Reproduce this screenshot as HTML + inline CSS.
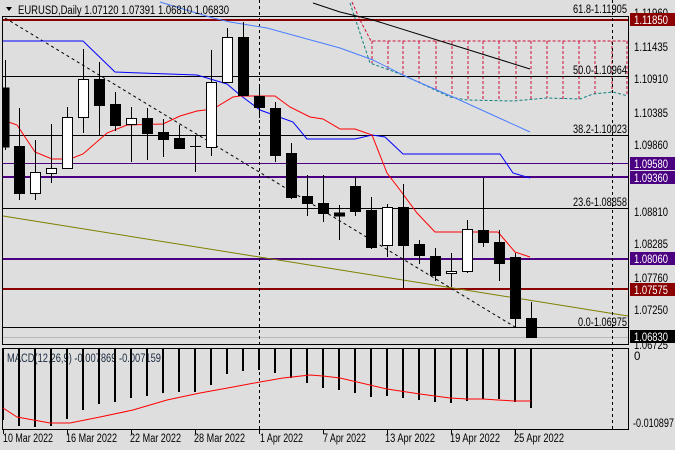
<!DOCTYPE html>
<html><head><meta charset="utf-8"><style>
html,body{margin:0;padding:0;background:#dedede;}
svg{display:block;font-family:"Liberation Sans",sans-serif;font-size:11.5px;}
</style></head><body>
<svg width="675" height="450" viewBox="0 0 675 450" xmlns="http://www.w3.org/2000/svg">
<rect width="675" height="450" fill="#dedede"/>
<rect x="2.5" y="16.5" width="626" height="328" fill="none" stroke="#000"/>
<rect x="2.5" y="348.5" width="626" height="81" fill="none" stroke="#000"/>
<g stroke="#d0103a" stroke-width="1" stroke-dasharray="3,2" fill="none">
<polyline points="352,2 360,20 371,41 628,41"/>
<line x1="372" y1="41" x2="372" y2="63"/><line x1="388" y1="41" x2="388" y2="69"/><line x1="403" y1="41" x2="403" y2="75"/><line x1="419" y1="41" x2="419" y2="83"/><line x1="436" y1="41" x2="436" y2="90"/><line x1="452" y1="41" x2="452" y2="97"/><line x1="468" y1="41" x2="468" y2="100"/><line x1="483" y1="41" x2="483" y2="100"/><line x1="499" y1="41" x2="499" y2="101"/><line x1="516" y1="41" x2="516" y2="101"/><line x1="531" y1="41" x2="531" y2="100"/><line x1="547" y1="41" x2="547" y2="98"/><line x1="563" y1="41" x2="563" y2="99"/><line x1="579" y1="41" x2="579" y2="99"/><line x1="595" y1="41" x2="595" y2="94"/><line x1="612" y1="41" x2="612" y2="92"/><line x1="627" y1="41" x2="627" y2="96"/>
</g>
<polyline points="350,3 370,63 403,75 450,97 467,100 513,101 547,98 580,99 593,94 613,92 628,96" fill="none" stroke="#108080" stroke-dasharray="3,2"/>
<g fill="none">
<line x1="3" y1="76.5" x2="628" y2="76.5" stroke="#000"/>
<line x1="3" y1="135.5" x2="628" y2="135.5" stroke="#000"/>
<line x1="3" y1="208.5" x2="628" y2="208.5" stroke="#000"/>
<line x1="3" y1="327.5" x2="628" y2="327.5" stroke="#000"/>
<line x1="3" y1="337.5" x2="628" y2="337.5" stroke="#b8b8b8"/>
<line x1="3" y1="163.5" x2="628" y2="163.5" stroke="#4b0082"/>
<line x1="3" y1="177" x2="628" y2="177" stroke="#4b0082" stroke-width="2"/>
<line x1="3" y1="259" x2="628" y2="259" stroke="#4b0082" stroke-width="2"/>
<line x1="3" y1="20" x2="628" y2="20" stroke="#8b0000" stroke-width="2"/>
<line x1="3" y1="289" x2="628" y2="289" stroke="#8b0000" stroke-width="2"/>
<line x1="3" y1="216" x2="628" y2="316" stroke="#808000"/>
<line x1="5" y1="18" x2="515" y2="327" stroke="#000" stroke-dasharray="3,3"/>
<line x1="259.5" y1="0" x2="259.5" y2="430" stroke="#000" stroke-dasharray="3,3"/>
<line x1="612.5" y1="0" x2="612.5" y2="430" stroke="#000" stroke-dasharray="3,3"/>
<polyline points="313,3 340,12 373,20 530,69" stroke="#000"/>
<polyline points="160,2 213,18 230,22 267,28 340,48 373,60 407,77 453,97 497,117 530,132" stroke="#4a7fff"/>
<polyline points="3,41 83,41 115,72 197,75 227,84 240,95 260,110 293,122 307,139 355,139 372,135 385,137 403,154 500,154 513,173 530,178" stroke="#0000ff"/>
<polyline points="3,120 17,125 35,152 52,159 70,159 83,154 107,133 127,125 163,124 180,116 197,111 213,109 233,97 240,96 275,96 290,107 310,117 323,119 340,129 355,129 372,135 387,173 400,190 417,213 435,232 498,232 515,252 530,257" stroke="#ff0000"/>
</g>
<g stroke="#000" stroke-width="1">
<line x1="5.5" y1="60" x2="5.5" y2="150"/><rect x="3" y="88" width="6" height="59" fill="#000"/>
<line x1="19.5" y1="108" x2="19.5" y2="200"/><rect x="14.5" y="146.5" width="10" height="47" fill="#000"/>
<line x1="35.5" y1="140" x2="35.5" y2="200"/><rect x="30.5" y="172.5" width="10" height="21" fill="#fff"/>
<line x1="51.5" y1="124" x2="51.5" y2="183"/><rect x="46.5" y="168.5" width="10" height="5" fill="#fff"/>
<line x1="67.5" y1="107" x2="67.5" y2="168"/><rect x="62.5" y="117.5" width="10" height="51" fill="#fff"/>
<line x1="83.5" y1="49" x2="83.5" y2="133"/><rect x="78.5" y="79.5" width="10" height="38" fill="#fff"/>
<line x1="99.5" y1="62" x2="99.5" y2="135"/><rect x="94.5" y="79.5" width="10" height="26" fill="#000"/>
<line x1="115.5" y1="92" x2="115.5" y2="131"/><rect x="110.5" y="104.5" width="10" height="21" fill="#000"/>
<line x1="131.5" y1="107" x2="131.5" y2="162"/><rect x="126.5" y="118.5" width="10" height="6" fill="#fff"/>
<line x1="147.5" y1="108" x2="147.5" y2="160"/><rect x="142.5" y="118.5" width="10" height="15" fill="#000"/>
<line x1="163.5" y1="119" x2="163.5" y2="157"/><rect x="158.5" y="132.5" width="10" height="7" fill="#000"/>
<line x1="179.5" y1="125" x2="179.5" y2="148"/><rect x="174.5" y="138.5" width="10" height="10" fill="#000"/>
<line x1="195.5" y1="136" x2="195.5" y2="172"/><line x1="190" y1="146.5" x2="201" y2="146.5"/>
<line x1="211.5" y1="50" x2="211.5" y2="156"/><rect x="206.5" y="82.5" width="10" height="65" fill="#fff"/>
<line x1="227.5" y1="28" x2="227.5" y2="82"/><rect x="222.5" y="37.5" width="10" height="45" fill="#fff"/>
<line x1="243.5" y1="22" x2="243.5" y2="95"/><rect x="238.5" y="37.5" width="10" height="58" fill="#000"/>
<line x1="259.5" y1="87" x2="259.5" y2="118"/><rect x="254.5" y="96.5" width="10" height="11" fill="#000"/>
<line x1="275.5" y1="102" x2="275.5" y2="162"/><rect x="270.5" y="108.5" width="10" height="47" fill="#000"/>
<line x1="291.5" y1="143" x2="291.5" y2="199"/><rect x="286.5" y="153.5" width="10" height="44" fill="#000"/>
<line x1="307.5" y1="175" x2="307.5" y2="216"/><rect x="302.5" y="196.5" width="10" height="7" fill="#000"/>
<line x1="323.5" y1="175" x2="323.5" y2="222"/><rect x="318.5" y="203.5" width="10" height="10" fill="#000"/>
<line x1="339.5" y1="205" x2="339.5" y2="240"/><rect x="334.5" y="213" width="10" height="3" fill="#000"/>
<line x1="355.5" y1="177" x2="355.5" y2="216"/><rect x="350.5" y="186.5" width="10" height="25" fill="#000"/>
<line x1="371.5" y1="197" x2="371.5" y2="249"/><rect x="366.5" y="210.5" width="10" height="37" fill="#000"/>
<line x1="387.5" y1="204" x2="387.5" y2="257"/><rect x="382.5" y="207.5" width="10" height="38" fill="#fff"/>
<line x1="403.5" y1="184" x2="403.5" y2="288"/><rect x="398.5" y="207.5" width="10" height="38" fill="#000"/>
<line x1="419.5" y1="240" x2="419.5" y2="264"/><rect x="414.5" y="244.5" width="10" height="11" fill="#000"/>
<line x1="435.5" y1="248" x2="435.5" y2="281"/><rect x="430.5" y="256.5" width="10" height="19" fill="#000"/>
<line x1="451.5" y1="253" x2="451.5" y2="287"/><rect x="446.5" y="271.5" width="10" height="2" fill="#fff"/>
<line x1="467.5" y1="220" x2="467.5" y2="273"/><rect x="462.5" y="229.5" width="10" height="42" fill="#fff"/>
<line x1="483.5" y1="178" x2="483.5" y2="247"/><rect x="478.5" y="230.5" width="10" height="12" fill="#000"/>
<line x1="499.5" y1="230" x2="499.5" y2="281"/><rect x="494.5" y="242.5" width="10" height="21" fill="#000"/>
<line x1="515.5" y1="253" x2="515.5" y2="327"/><rect x="510.5" y="257.5" width="10" height="61" fill="#000"/>
<line x1="531.5" y1="302" x2="531.5" y2="338"/><rect x="526.5" y="318.5" width="10" height="19" fill="#000"/>
</g>
<text x="7" y="362" fill="#1a2a40" textLength="154" lengthAdjust="spacingAndGlyphs">MACD(12,26,9) -0.007869 -0.007159</text>
<g stroke="#000" stroke-width="2">
<line x1="3" y1="349" x2="3" y2="420"/><line x1="19" y1="349" x2="19" y2="426"/><line x1="35" y1="349" x2="35" y2="427"/><line x1="51" y1="349" x2="51" y2="426"/><line x1="67" y1="349" x2="67" y2="419"/><line x1="83" y1="349" x2="83" y2="410"/><line x1="99" y1="349" x2="99" y2="404"/><line x1="115" y1="349" x2="115" y2="402"/><line x1="131" y1="349" x2="131" y2="398"/><line x1="147" y1="349" x2="147" y2="396"/><line x1="163" y1="349" x2="163" y2="393"/><line x1="179" y1="349" x2="179" y2="392"/><line x1="195" y1="349" x2="195" y2="392"/><line x1="211" y1="349" x2="211" y2="385"/><line x1="227" y1="349" x2="227" y2="374"/><line x1="243" y1="349" x2="243" y2="371"/><line x1="259" y1="349" x2="259" y2="370"/><line x1="275" y1="349" x2="275" y2="373"/><line x1="291" y1="349" x2="291" y2="378"/><line x1="307" y1="349" x2="307" y2="383"/><line x1="323" y1="349" x2="323" y2="388"/><line x1="339" y1="349" x2="339" y2="390"/><line x1="355" y1="349" x2="355" y2="393"/><line x1="371" y1="349" x2="371" y2="397"/><line x1="387" y1="349" x2="387" y2="396"/><line x1="403" y1="349" x2="403" y2="398"/><line x1="419" y1="349" x2="419" y2="400"/><line x1="435" y1="349" x2="435" y2="402"/><line x1="451" y1="349" x2="451" y2="403"/><line x1="467" y1="349" x2="467" y2="401"/><line x1="483" y1="349" x2="483" y2="399"/><line x1="499" y1="349" x2="499" y2="399"/><line x1="515" y1="349" x2="515" y2="402"/><line x1="531" y1="349" x2="531" y2="408"/>
</g>
<polyline fill="none" stroke="#ff0000" points="3,408 17,417 50,423 70,423 100,417 133,410 167,400 200,393 233,387 260,382 283,378 310,375 323,376 340,378 387,389 420,394 450,398 467,399 483,399 498,400 515,401 531,401"/>
<g fill="#000" text-anchor="end">
<text x="627" y="13" textLength="54" lengthAdjust="spacingAndGlyphs">61.8-1.11905</text>
<text x="627" y="74" textLength="54" lengthAdjust="spacingAndGlyphs">50.0-1.10964</text>
<text x="627" y="133" textLength="54" lengthAdjust="spacingAndGlyphs">38.2-1.10023</text>
<text x="627" y="206" textLength="54" lengthAdjust="spacingAndGlyphs">23.6-1.08858</text>
<text x="627" y="326" textLength="49" lengthAdjust="spacingAndGlyphs">0.0-1.06975</text>
</g>
<path d="M6 7 L12 7 L9 11 Z" fill="#000"/>
<text x="18" y="14" fill="#000" textLength="211" lengthAdjust="spacingAndGlyphs">EURUSD,Daily  1.07120 1.07391 1.06810 1.06830</text>
<g fill="#000">
<text x="634" y="17" textLength="34" lengthAdjust="spacingAndGlyphs">1.11960</text>
<text x="634" y="51" textLength="34" lengthAdjust="spacingAndGlyphs">1.11435</text>
<text x="634" y="83" textLength="34" lengthAdjust="spacingAndGlyphs">1.10910</text>
<text x="634" y="117" textLength="34" lengthAdjust="spacingAndGlyphs">1.10385</text>
<text x="634" y="149" textLength="34" lengthAdjust="spacingAndGlyphs">1.09860</text>
<text x="634" y="216" textLength="34" lengthAdjust="spacingAndGlyphs">1.08810</text>
<text x="634" y="248" textLength="34" lengthAdjust="spacingAndGlyphs">1.08285</text>
<text x="634" y="282" textLength="34" lengthAdjust="spacingAndGlyphs">1.07760</text>
<text x="634" y="314" textLength="34" lengthAdjust="spacingAndGlyphs">1.07250</text>
<text x="634" y="349" textLength="34" lengthAdjust="spacingAndGlyphs">1.06725</text>
<text x="634" y="360">0</text>
<text x="633" y="427" textLength="41" lengthAdjust="spacingAndGlyphs">-0.010897</text>
</g>
<rect x="630" y="13" width="45" height="13" fill="#8b0000"/><text x="634" y="24" fill="#fff" textLength="34" lengthAdjust="spacingAndGlyphs">1.11850</text>
<rect x="630" y="157" width="45" height="13" fill="#4b0082"/><text x="634" y="168" fill="#fff" textLength="34" lengthAdjust="spacingAndGlyphs">1.09580</text>
<rect x="630" y="171" width="45" height="13" fill="#4b0082"/><text x="634" y="182" fill="#fff" textLength="34" lengthAdjust="spacingAndGlyphs">1.09360</text>
<rect x="630" y="252" width="45" height="13" fill="#4b0082"/><text x="634" y="263" fill="#fff" textLength="34" lengthAdjust="spacingAndGlyphs">1.08060</text>
<rect x="630" y="283" width="45" height="13" fill="#8b0000"/><text x="634" y="294" fill="#fff" textLength="34" lengthAdjust="spacingAndGlyphs">1.07575</text>
<rect x="630" y="330" width="45" height="13" fill="#000"/><text x="634" y="341" fill="#fff" textLength="34" lengthAdjust="spacingAndGlyphs">1.06830</text>
<g stroke="#000"><line x1="3.5" y1="430" x2="3.5" y2="434"/><line x1="67.5" y1="430" x2="67.5" y2="434"/><line x1="131.5" y1="430" x2="131.5" y2="434"/><line x1="195.5" y1="430" x2="195.5" y2="434"/><line x1="259.5" y1="430" x2="259.5" y2="434"/><line x1="323.5" y1="430" x2="323.5" y2="434"/><line x1="387.5" y1="430" x2="387.5" y2="434"/><line x1="451.5" y1="430" x2="451.5" y2="434"/><line x1="515.5" y1="430" x2="515.5" y2="434"/></g>
<g fill="#000">
<text x="3" y="442" textLength="50" lengthAdjust="spacingAndGlyphs">10 Mar 2022</text>
<text x="66" y="442" textLength="51" lengthAdjust="spacingAndGlyphs">16 Mar 2022</text>
<text x="130" y="442" textLength="51" lengthAdjust="spacingAndGlyphs">22 Mar 2022</text>
<text x="194" y="442" textLength="51" lengthAdjust="spacingAndGlyphs">28 Mar 2022</text>
<text x="260" y="442" textLength="43" lengthAdjust="spacingAndGlyphs">1 Apr 2022</text>
<text x="323" y="442" textLength="43" lengthAdjust="spacingAndGlyphs">7 Apr 2022</text>
<text x="385" y="442" textLength="50" lengthAdjust="spacingAndGlyphs">13 Apr 2022</text>
<text x="450" y="442" textLength="50" lengthAdjust="spacingAndGlyphs">19 Apr 2022</text>
<text x="514" y="442" textLength="50" lengthAdjust="spacingAndGlyphs">25 Apr 2022</text>
</g>
</svg>
</body></html>
